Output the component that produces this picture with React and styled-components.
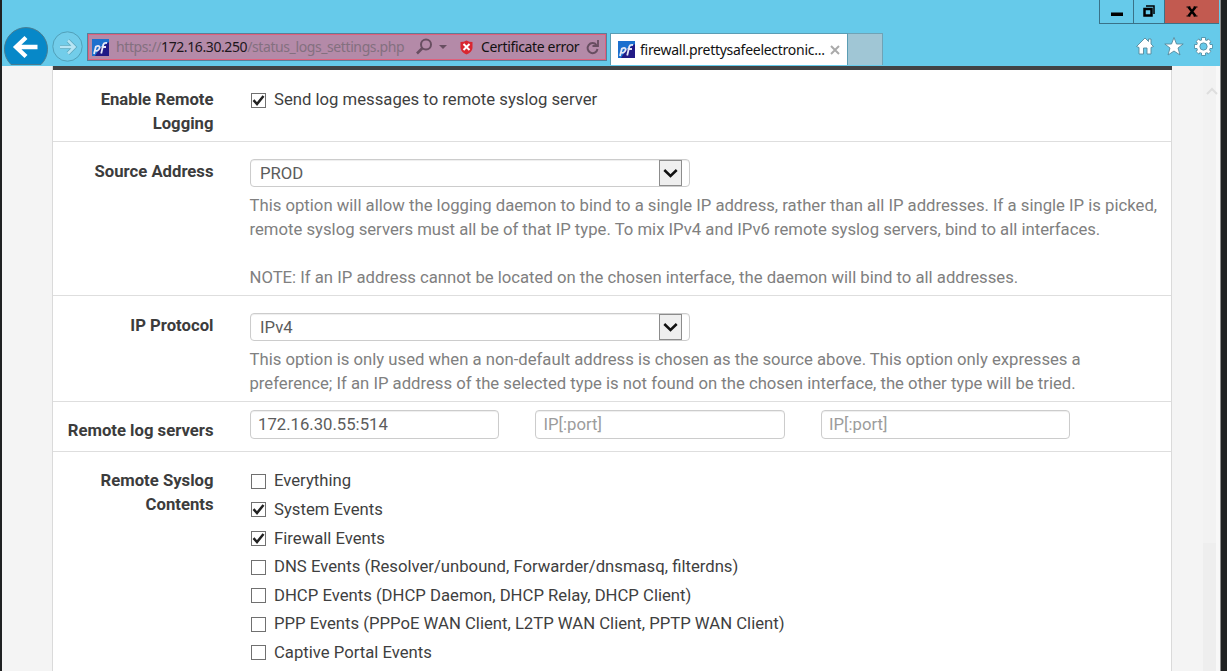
import React from "react";
import styled, { createGlobalStyle } from "styled-components";

const Global = createGlobalStyle`
  * { box-sizing: border-box; }
  html, body { margin: 0; padding: 0; }
  body { width: 1227px; height: 671px; overflow: hidden; background: #1d1f20; }
`;

const Desktop = styled.div`
  display: flex;
  width: 1227px;
  height: 671px;
  padding: 0 6px 0 2px;
  background: #1f2122;
  overflow: hidden;
  font-family: Roboto, "Liberation Sans", sans-serif;
`;

const Browser = styled.div`
  flex: 1;
  display: flex;
  flex-direction: column;
  background: #f4f4f4;
  border-right: 1px solid #8a8a8a;
`;

const Chrome = styled.header`
  height: 66px;
  flex: none;
  display: flex;
  flex-direction: column;
  background: #66caea;
  font-family: "Noto Sans", "Open Sans", sans-serif;
`;

const TitleBar = styled.div`
  height: 24px;
  flex: none;
  display: flex;
  justify-content: flex-end;
  padding-right: 1px;
`;

const WindowButton = styled.button`
  display: flex;
  align-items: center;
  justify-content: center;
  width: ${(p) => p.$width}px;
  height: 24px;
  padding: 0;
  border: 0 solid #3a7288;
  border-width: 0 0 1px 1px;
  background: ${(p) => (p.$danger ? "#c25a50" : "transparent")};
`;

const ToolBar = styled.div`
  height: 42px;
  display: flex;
  align-items: flex-start;
`;

const NavIcons = styled.svg`
  flex: none;
  width: 84px;
  height: 42px;
  display: block;
`;

const AddressBar = styled.div`
  display: flex;
  align-items: center;
  width: 520px;
  height: 28px;
  margin-top: 9px;
  margin-left: 1px;
  padding-left: 4px;
  background: #b48aa8;
  border: 1px solid #57809a;
  box-shadow: inset 0 0 0 1px #e0607c;
`;

const ChromeText = styled.span`
  flex: none;
  margin-left: ${(p) => p.$left}px;
  width: ${(p) => p.$width}px;
  font-size: 14px;
  line-height: 20px;
  letter-spacing: ${(p) => p.$track || 0}px;
  white-space: nowrap;
  color: ${(p) => p.$color || "#111"};
`;

const Host = styled.span`
  color: #1c161b;
`;

const Glyph = styled.svg`
  flex: none;
  display: block;
  margin-left: ${(p) => p.$left || 0}px;
`;

const Tab = styled.div`
  display: flex;
  align-items: center;
  width: 238px;
  height: 32px;
  margin: 9px 0 0 3px;
  padding-left: 7px;
  background: #fff;
  border: 1px solid #5b9db4;
  border-bottom: 0;
`;

const NewTab = styled.div`
  width: 35px;
  height: 32px;
  margin-top: 9px;
  background: #a0c6d5;
  border: 1px solid #6fa3b6;
  border-left: 0;
  border-bottom: 0;
`;

const Tools = styled.div`
  display: flex;
  gap: 10px;
  margin: 13px 7px 0 auto;
`;

const Page = styled.main`
  flex: 1;
  display: flex;
  min-height: 0;
  overflow: hidden;
`;

const Panel = styled.section`
  width: 1120px;
  margin-left: 50px;
  flex: none;
  background: #fff;
  border: 1px solid #dadada;
  border-width: 0 1px;
`;

const PanelTop = styled.div`
  height: 4px;
  margin: 0 -1px 0 0;
  background: #414345;
`;

const ScrollTrack = styled.div`
  display: flex;
  flex-direction: column;
  align-items: stretch;
  width: 17px;
  margin-left: auto;
  padding-top: 20px;
  background: #f2f2f2;
  border-right: 4px solid #f8f8f8;
`;

const ScrollArrow = styled.svg`
  width: 13px;
  height: 9px;
  margin-left: 2px;
  overflow: visible;
`;

const ScrollThumb = styled.div`
  margin-top: 448px;
  flex: 1;
  background: #eeeeee;
`;

const FormRow = styled.div`
  display: flex;
  height: ${(p) => p.$height}px;
  padding-top: ${(p) => p.$top}px;
  border-bottom: 1px solid #dedede;
`;

const Label = styled.div`
  flex: none;
  width: 160.5px;
  margin-right: 36px;
  padding-top: ${(p) => p.$drop || 0}px;
  text-align: right;
  white-space: pre-line;
  font-size: 16.7px;
  font-weight: 700;
  line-height: 24px;
  color: #3c3c3c;
`;

const Field = styled.div`
  flex: 1;
`;

const Select = styled.div`
  display: flex;
  align-items: center;
  justify-content: space-between;
  width: 440px;
  height: 28px;
  margin-top: -1px;
  padding: 0 7px 0 9.5px;
  border: 1px solid #cccccc;
  border-radius: 4px;
  box-shadow: inset 0 1px 1px rgba(0, 0, 0, 0.07);
  font-size: 16.7px;
  color: #5c5c5c;
`;

const SelectButton = styled.span`
  display: flex;
  align-items: center;
  justify-content: center;
  width: 23px;
  height: 26px;
  background: #efefef;
  border: 1px solid #8c8c8c;
`;

const Help = styled.p`
  margin: 7px 0 0;
  font-size: 16.7px;
  line-height: 24px;
  color: #808080;
`;

const Line = styled.span`
  display: block;
  min-height: 24px;
  white-space: nowrap;
`;

const Inputs = styled.div`
  display: flex;
  gap: 36px;
`;

const TextBox = styled.div`
  width: 249.5px;
  height: 29px;
  padding-left: 7.5px;
  border: 1px solid #cccccc;
  border-radius: 4px;
  box-shadow: inset 0 1px 1px rgba(0, 0, 0, 0.07);
  font-size: 16.7px;
  line-height: 27px;
  color: ${(p) => (p.$placeholder ? "#9c9c9c" : "#5c5c5c")};
`;

const CheckRow = styled.div`
  display: flex;
  align-items: center;
  height: 24px;
  margin-bottom: 4.6px;
  padding-left: 1.5px;
  font-size: 16.7px;
  line-height: 24px;
  white-space: nowrap;
  color: #3f3f3f;
`;

const CheckBox = styled.svg`
  flex: none;
  width: 15px;
  height: 15px;
  margin-right: 8px;
`;

const Favicon = () => (
  <Glyph width="17" height="17" viewBox="0 0 17 17">
    <path d="M0 0H17V17H0Z" fill="#1c70ce" />
    <path d="M17 3V17H3L8 9Z" fill="#221a86" />
    <path d="M2 15L4 7M3.7 8C7 5.500 8.800 8 6.800 10.500C5.600 12 4 12 3.200 11.400M9.200 14.500L11.300 5.500Q12 3.500 15 4M9.500 8H14" fill="none" stroke="#e6e8f5" strokeWidth="1.8" />
  </Glyph>
);

const Check = ({ checked, children }) => (
  <CheckRow>
    <CheckBox viewBox="0 0 15 15">
      <rect x=".5" y=".5" width="14" height="14" fill="#fff" stroke="#707070" />
      {checked && <path d="M2.500 7.200L6 11L12.500 3" fill="none" stroke="#222" strokeWidth="2.500" />}
    </CheckBox>
    <Line>{children}</Line>
  </CheckRow>
);

const Dropdown = ({ children }) => (
  <Select>
    {children}
    <SelectButton>
      <svg width="15" height="9" viewBox="0 0 15 9">
        <path d="M1.300 1L7.500 7L13.700 1" fill="none" stroke="#111" strokeWidth="2.500" />
      </svg>
    </SelectButton>
  </Select>
);

const contents = [
  ["Everything", false],
  ["System Events", true],
  ["Firewall Events", true],
  ["DNS Events (Resolver/unbound, Forwarder/dnsmasq, filterdns)", false],
  ["DHCP Events (DHCP Daemon, DHCP Relay, DHCP Client)", false],
  ["PPP Events (PPPoE WAN Client, L2TP WAN Client, PPTP WAN Client)", false],
  ["Captive Portal Events", false],
];

export default function App() {
  return (
    <Desktop>
      <Global />
      <Browser>
        <Chrome>
          <TitleBar>
            <WindowButton $width={34} aria-label="Minimize">
              <svg width="12" height="24"><path d="M0 12.500H12V16H0Z" fill="#000" /></svg>
            </WindowButton>
            <WindowButton $width={31} aria-label="Restore">
              <svg width="12" height="24"><path d="M1.500 9H8.500V15.500H1.500Z" fill="none" stroke="#000" strokeWidth="2.500" /><path d="M3 6H11V14" fill="none" stroke="#000" strokeWidth="1.500" /></svg>
            </WindowButton>
            <WindowButton $width={55} $danger aria-label="Close">
              <svg width="12" height="24"><path d="M2.500 7L9.500 16M9.500 7L2.500 16" stroke="#000" strokeWidth="2.500" /><path d="M.5 7H4.500M7.500 7H11.500M.5 16H4.500M7.500 16H11.500" stroke="#000" /></svg>
            </WindowButton>
          </TitleBar>
          <ToolBar>
            <NavIcons viewBox="2 24 84 42" overflow="visible">
              <path d="M11 64.500A21.500 21.500 0 1 1 41 64.500Z" fill="#0788c8" stroke="#477c91" strokeWidth="1" />
              <path d="M37.500 47H16M26 37.500L16 47L26 56.500" fill="none" stroke="#fff" strokeWidth="4.300" />
              <circle cx="67.500" cy="46.500" r="14.700" fill="#72cdea" stroke="#51a0b9" />
              <path d="M60 47H74M68 40.500L74.500 47L68 53.500" fill="none" stroke="#5ba9bf" strokeWidth="4" />
              <path d="M60 47H74M68 40.500L74.500 47L68 53.500" fill="none" stroke="#b7e5f4" strokeWidth="2.500" />
            </NavIcons>
            <AddressBar>
              <Favicon />
              <ChromeText $left={7} $width={289} $track={-0.4} $color="#83707f">
                https://<Host>172.16.30.250</Host>/status_logs_settings.php
              </ChromeText>
              <Glyph width="34" height="18" viewBox="0 0 34 18" $left={11}>
                <circle cx="10" cy="6.500" r="5" fill="none" stroke="#684e61" strokeWidth="2" />
                <path d="M6.500 10L1 15.500" stroke="#684e61" strokeWidth="2.600" />
                <path d="M23 7H31L27 11Z" fill="#684e61" />
              </Glyph>
              <Glyph width="13" height="15" viewBox="0 0 13 15" $left={10}>
                <path d="M.5 2Q4 2 6.500.5Q9 2 12.500 2V8Q12 12 6.500 14.500Q1 12 .5 8Z" fill="#d92630" />
                <path d="M3.500 4L9.500 10M9.500 4L3.500 10" stroke="#fff" strokeWidth="2" />
              </Glyph>
              <ChromeText $left={8} $width={98} $track={-0.35}>Certificate error</ChromeText>
              <Glyph width="13" height="15" viewBox="0 0 13 15" $left={7}>
                <path d="M10.500 5A5 5 0 1 0 11.500 9" fill="none" stroke="#684e61" strokeWidth="2" />
                <path d="M12 0V6H6.500" fill="none" stroke="#684e61" strokeWidth="1.800" />
              </Glyph>
            </AddressBar>
            <Tab>
              <Favicon />
              <ChromeText $left={5} $width={186} $track={-0.27}>firewall.prettysafeelectronic...</ChromeText>
              <Glyph width="10" height="10" viewBox="0 0 10 10" $left={4}>
                <path d="M1 1L9 9M9 1L1 9" stroke="#aaa" strokeWidth="2" />
              </Glyph>
            </Tab>
            <NewTab />
            <Tools>
              <svg width="18" height="18" viewBox="0 0 18 18">
                <path d="M9 1L12.500 4.500V2H15V7L17.500 9.500L15 10.500V17H11V11H7.500V17H3V10.500L.5 9.500Z" fill="#fff" stroke="#56899c" strokeWidth=".9" />
              </svg>
              <svg width="20" height="19" viewBox="0 0 20 19">
                <path d="M10 .5L12.500 7H19.200L14 11L16 18L10 14L4 18L6 11L.8 7H7.500Z" fill="#fff" stroke="#56899c" strokeWidth=".9" />
              </svg>
              <svg width="19" height="19" viewBox="0 0 19 19">
                <g stroke="#56899c" strokeWidth="4.500"><path d="M9.500 .3V18.700M.3 9.500H18.700M3.200 3.200L15.800 15.800M15.800 3.200L3.200 15.800" /></g>
                <circle cx="9.500" cy="9.500" r="7.200" fill="#56899c" />
                <g stroke="#fff" strokeWidth="3"><path d="M9.500 1V18M1 9.500H18M3.500 3.500L15.500 15.500M15.500 3.500L3.500 15.500" /></g>
                <circle cx="9.500" cy="9.500" r="5.200" fill="#66caea" stroke="#fff" strokeWidth="2.800" />
                <circle cx="9.500" cy="9.500" r="3.600" fill="none" stroke="#56899c" strokeWidth=".8" />
              </svg>
            </Tools>
          </ToolBar>
        </Chrome>
        <Page>
          <Panel>
            <PanelTop />
            <FormRow $height={72} $top={18}>
              <Label>{"Enable Remote\nLogging"}</Label>
              <Field><Check checked>Send log messages to remote syslog server</Check></Field>
            </FormRow>
            <FormRow $height={154} $top={18}>
              <Label>Source Address</Label>
              <Field>
                <Dropdown>PROD</Dropdown>
                <Help>
                  <Line>This option will allow the logging daemon to bind to a single IP address, rather than all IP addresses. If a single IP is picked,</Line>
                  <Line>remote syslog servers must all be of that IP type. To mix IPv4 and IPv6 remote syslog servers, bind to all interfaces.</Line>
                  <Line />
                  <Line>NOTE: If an IP address cannot be located on the chosen interface, the daemon will bind to all addresses.</Line>
                </Help>
              </Field>
            </FormRow>
            <FormRow $height={106} $top={18}>
              <Label>IP Protocol</Label>
              <Field>
                <Dropdown>IPv4</Dropdown>
                <Help>
                  <Line>This option is only used when a non-default address is chosen as the source above. This option only expresses a</Line>
                  <Line>preference; If an IP address of the selected type is not found on the chosen interface, the other type will be tried.</Line>
                </Help>
              </Field>
            </FormRow>
            <FormRow $height={50} $top={8}>
              <Label $drop={9}>Remote log servers</Label>
              <Inputs>
                <TextBox>172.16.30.55:514</TextBox>
                <TextBox $placeholder>IP[:port]</TextBox>
                <TextBox $placeholder>IP[:port]</TextBox>
              </Inputs>
            </FormRow>
            <FormRow $height={240} $top={17.4}>
              <Label>{"Remote Syslog\nContents"}</Label>
              <Field>
                {contents.map(([text, checked]) => (
                  <Check key={text} checked={checked}>{text}</Check>
                ))}
              </Field>
            </FormRow>
          </Panel>
          <ScrollTrack>
            <ScrollArrow><path d="M2 8L7 3L12 8" fill="none" stroke="#dedede" strokeWidth="2" /></ScrollArrow>
            <ScrollThumb />
          </ScrollTrack>
        </Page>
      </Browser>
    </Desktop>
  );
}
